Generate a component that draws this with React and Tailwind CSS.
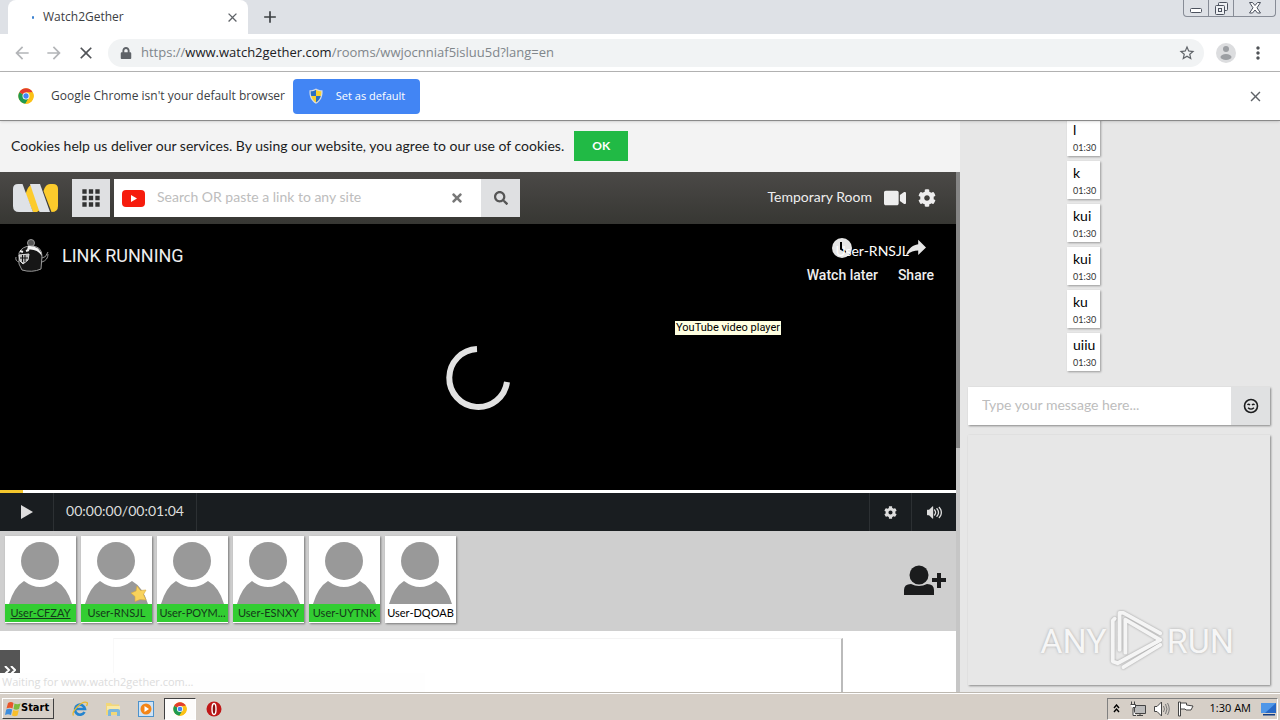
import { useState } from 'react';
import { FaCog, FaLock, FaSearch, FaTimes, FaVideo } from 'react-icons/fa';
import { MdApps, MdArrowBack, MdArrowForward, MdClose, MdAdd, MdStarBorder, MdMoreVert } from 'react-icons/md';
import { ImVolumeHigh } from 'react-icons/im';

const users = [
  { name: 'User-CFZAY', ready: true, me: true },
  { name: 'User-RNSJL', ready: true, host: true },
  { name: 'User-POYM...', ready: true },
  { name: 'User-ESNXY', ready: true },
  { name: 'User-UYTNK', ready: true },
  { name: 'User-DQOAB', ready: false },
];

const messages = ['l', 'k', 'kui', 'kui', 'ku', 'uiiu'];

function ChromeLogo({ className }) {
  return (
    <svg viewBox="0 0 48 48" className={className} aria-hidden="true">
      <circle cx="24" cy="24" r="23" fill="#fbc116" />
      <path d="M24 24 L4.1 12.500 A23 23 0 0 0 22 47 L33.500 29.500 Z" fill="#1e9a50" />
      <path d="M24 24 L4.1 12.500 A23 23 0 0 1 43.900 12.500 L24 13.500 Z" fill="#e33b2e" />
      <path d="M24 13.500 H44.500 A23 23 0 0 1 22 47 L33 29.500 Z" fill="#fbc116" />
      <circle cx="24" cy="24" r="10.500" fill="#fff" />
      <circle cx="24" cy="24" r="8" fill="#4285f4" />
    </svg>
  );
}

function ShieldIcon() {
  return (
    <svg viewBox="0 0 16 16" className="h-4 w-4" aria-hidden="true">
      <path d="M8 0.5 C10 2 12.5 2.3 14.5 2.2 C15 8 13 13 8 15.7 C3 13 1 8 1.5 2.2 C3.5 2.3 6 2 8 0.5Z" fill="#d8dde4" />
      <path d="M8 1.8 C6.5 2.9 4.5 3.3 2.7 3.3 C2.6 5 2.8 6.6 3.2 8 H8Z" fill="#2b6fc4" />
      <path d="M8 1.8 C9.5 2.9 11.5 3.3 13.3 3.3 C13.4 5 13.2 6.6 12.8 8 H8Z" fill="#f8d12f" />
      <path d="M3.2 8 C4 11 5.6 13 8 14.4 V8Z" fill="#f8d12f" />
      <path d="M12.8 8 C12 11 10.4 13 8 14.4 V8Z" fill="#2b6fc4" />
    </svg>
  );
}

function TabStrip() {
  return (
    <div className="flex h-[34px] shrink-0 bg-[#dee1e6] pl-2">
      <div className="flex w-60 items-center rounded-t-lg bg-white pl-6 pr-2">
        <span className="mr-[9px] h-[3px] w-[2px] rounded-full bg-[#3b82d0]" />
        <span className="flex-1 text-[12px] text-[#3c4043]">Watch2Gether</span>
        <button type="button" aria-label="Close tab" className="text-[#5f6368]"><MdClose size={15} /></button>
      </div>
      <button type="button" aria-label="New tab" className="ml-3 text-[#3c4043]"><MdAdd size={20} /></button>
      <div className="ml-auto mr-1 flex h-[17px] w-[93px] divide-x divide-[#878c96] rounded-b border border-t-0 border-[#878c96] text-[#4c525e]">
        <button type="button" aria-label="Minimize" className="flex w-[25px] items-center justify-center">
          <svg viewBox="0 0 12 12" className="h-3 w-3" fill="#fff" stroke="currentColor"><rect x="0.5" y="6.5" width="11" height="4" rx="1" /></svg>
        </button>
        <button type="button" aria-label="Restore" className="flex w-[25px] items-center justify-center">
          <svg viewBox="0 0 13 13" className="h-[13px] w-[13px]" fill="#eef0f3" stroke="currentColor">
            <rect x="3.5" y="0.5" width="9" height="8" rx="1" /><rect x="0.5" y="3.5" width="9" height="9" rx="1" /><rect x="3.5" y="6.5" width="3" height="3" />
          </svg>
        </button>
        <button type="button" aria-label="Close" className="flex flex-1 items-center justify-center">
          <svg viewBox="0 0 12 12" className="h-3 w-3" fill="#fff" stroke="currentColor">
            <path d="M0.5 0.5 H3.5 L6 3.5 L8.5 0.5 H11.5 L8 5.8 L11.5 11 H8.5 L6 8 L3.5 11 H0.5 L4 5.8Z" />
          </svg>
        </button>
      </div>
    </div>
  );
}

function Toolbar() {
  return (
    <div className="flex h-[38px] shrink-0 items-center border-b border-[#b4b4b4] bg-white pl-3 pr-3">
      <button type="button" aria-label="Back" className="mr-3 text-[#b3b5b8]"><MdArrowBack size={20} /></button>
      <button type="button" aria-label="Forward" className="mr-3 text-[#b3b5b8]"><MdArrowForward size={20} /></button>
      <button type="button" aria-label="Stop" className="mr-3 text-[#505357]"><MdClose size={20} /></button>
      <div className="flex h-7 flex-1 items-center rounded-full bg-[#f1f3f4] pl-3 pr-2">
        <FaLock size={12} className="mr-2 text-[#5f6368]" />
        <div role="textbox" aria-label="Address" contentEditable suppressContentEditableWarning
          className="flex-1 pb-[2px] pl-px text-[13px] leading-5 text-[#80868b] outline-none">
          https://<span className="text-[#202124]">www.watch2gether.com</span>/rooms/wwjocnniaf5isluu5d?lang=en
        </div>
        <button type="button" aria-label="Bookmark" className="text-[#5f6368]"><MdStarBorder size={18} /></button>
      </div>
      <button type="button" aria-label="Profile" className="ml-3 mr-3">
        <svg viewBox="0 0 20 20" className="h-5 w-5">
          <circle cx="10" cy="10" r="10" fill="#dcdddf" />
          <circle cx="10" cy="6" r="3" fill="#9c9fa3" />
          <ellipse cx="10" cy="14" rx="5.5" ry="3" fill="#9c9fa3" />
        </svg>
      </button>
      <button type="button" aria-label="Menu" className="text-[#505357]"><MdMoreVert size={20} /></button>
    </div>
  );
}

function InfoBar() {
  return (
    <div className="z-10 flex h-[49px] shrink-0 items-center border-b border-[#8a8a8a] bg-white pl-[18px] pr-4 shadow">
      <ChromeLogo className="h-4 w-4" />
      <span className="ml-[17px] text-[12px] text-[#3c4043]">Google Chrome isn't your default browser</span>
      <button type="button" className="ml-2 flex h-[35px] w-[127px] items-center justify-center gap-3 rounded bg-[#4285f4] text-[11px] text-white">
        <ShieldIcon />
        Set as default
      </button>
      <button type="button" aria-label="Dismiss" className="ml-auto text-[#5f6368]"><MdClose size={17} /></button>
    </div>
  );
}

function RoomHeader() {
  const [query, setQuery] = useState('');

  return (
    <header className="flex h-[52px] shrink-0 items-center bg-linear-to-b from-[#4b4947] to-[#373733] pl-[13px] pr-5 text-[#eee]">
      <svg viewBox="0 0 45 28" className="mr-[14px] h-7 w-[45px]" aria-label="w2g">
        <path d="M12.500 10 Q15 2 18 1 L27 26 L24 28 H20Z" fill="#fccb2c" />
        <path d="M5 0 H9.500 L20 28 H6 Q0 28 0 22 V5 Q0 0 5 0Z" fill="#dfe2e6" />
        <path d="M17 0 H27 L37 28 H26.500Z" fill="#dfe2e6" />
        <path d="M30.500 7 Q32.500 0 37 0 H40 Q45 0 45 5 V22 Q45 28 38.500 28Z" fill="#fccb2c" />
      </svg>
      <button type="button" aria-label="Apps" className="mr-1 flex h-[38px] w-[38px] items-center justify-center bg-[#dfe0e2] text-[#333]">
        <MdApps size={26} />
      </button>
      <div className="flex h-[38px] w-[406px] bg-white">
        <button type="button" aria-label="YouTube" className="px-2">
          <svg viewBox="0 0 23 17" className="h-[17px] w-[23px]"><rect width="23" height="17" rx="4" fill="#f61c0d" /><path d="M9 5 L15 8.5 L9 12Z" fill="#fff" /></svg>
        </button>
        <input type="text" aria-label="Search" placeholder="Search OR paste a link to any site"
          value={query} onChange={e => setQuery(e.target.value)}
          className="min-w-0 flex-1 px-1 pb-1 text-[14px] text-[#333] outline-none placeholder:text-[#bdbdbd]" />
        <button type="button" aria-label="Clear" onClick={() => setQuery('')} className="px-[17px] text-[#777]"><FaTimes size={14} /></button>
        <button type="button" aria-label="Search videos" className="flex w-[39px] items-center justify-center bg-[#dfe0e2] text-[#555]"><FaSearch size={14} /></button>
      </div>
      <span className="ml-auto pb-1 text-[14px]">Temporary Room</span>
      <button type="button" aria-label="Camera" className="ml-3"><FaVideo size={22} /></button>
      <button type="button" aria-label="Room settings" className="ml-3"><FaCog size={18} /></button>
    </header>
  );
}

function Player() {
  return (
    <section className="relative min-h-0 flex-1 bg-black font-[Roboto,sans-serif] text-[#eee]">
      <div className="flex items-start pl-[14px] pr-[22px] pt-[6px]">
        <svg viewBox="0 0 36 36" className="mt-2 h-9 w-9" fill="none" stroke="#999" strokeWidth="1" aria-hidden="true">
          <circle cx="17" cy="5" r="3.500" fill="#555" />
          <path d="M5 15 Q8 8 17 8 Q28 8 28 18 L27 31 Q18 35 8 32 L5 26Z" fill="#161616" />
          <path d="M14 8 Q26 7 28 18 Q22 10 13 12Z" fill="#f2f2f2" stroke="none" />
          <path d="M28 20 Q32 20 34 14 M28 24 Q34 22 34 16 M5 24 Q1 23 2 19" />
          <path d="M6 13 L9 14 M12 13 L15 12" stroke="#eee" strokeWidth="2" />
          <path d="M5 17 L15 16 L14 22 L9 26 L6 23Z" fill="#bbb" stroke="#ddd" />
          <path d="M6 20 H14 M8.500 17 V24 M11 17 V24" stroke="#111" />
        </svg>
        <h1 className="ml-3 mt-[14px] text-[18px] leading-6">LINK RUNNING</h1>
        <div className="ml-auto flex gap-5 text-[14px] font-medium leading-[18px]">
          <button type="button" className="flex flex-col items-center">
            <svg viewBox="0 0 36 36" className="h-9 w-9"><circle cx="18" cy="18" r="10" fill="#e6e6e6" /><path d="M17 12 V19 L22 22" fill="none" stroke="#000" strokeWidth="2" /></svg>
            Watch later
          </button>
          <button type="button" className="flex flex-col items-center">
            <svg viewBox="0 0 36 36" className="h-9 w-9" fill="#e6e6e6">
              <path d="m 20.2,14.2 0,-4.500 7.8,7.8 -7.8,7.6 0,-4.500 C 16.3,20.7 12.1,21.8 9.3,24.8 8.8,25.1 7.6,27.3 8.1,25.6 9.1,21.3 11.8,17.2 16,15.4 c 1.3,-0.6 2.8,-1 4.2,-1.2 z" />
            </svg>
            Share
          </button>
        </div>
      </div>
      <span className="absolute right-[47px] top-[17px] font-[Lato,sans-serif] text-[14px] leading-5 text-white">User-RNSJL</span>
      <svg viewBox="0 0 66 66" className="absolute left-1/2 top-[121px] h-[66px] w-[66px] -translate-x-1/2" fill="none" aria-hidden="true">
        <path d="M32 4 A29 29 0 1 0 62 37" stroke="#e2e2e2" strokeWidth="6" />
      </svg>
      <div role="tooltip" className="absolute right-[175px] top-[97px] bg-[#ffffe1] px-[1px] font-[Roboto,sans-serif] text-[11px] leading-[14px] text-black">
        YouTube video player
      </div>
    </section>
  );
}

function Controls() {
  return (
    <div className="shrink-0">
      <div className="h-[3px] bg-white"><div className="h-full w-[23px] bg-[#f4c62c]" /></div>
      <div className="flex h-[38px] items-stretch bg-[#191d20] text-[#ddd]">
        <button type="button" aria-label="Play" className="flex w-[54px] items-center justify-center border-r border-[#2c3033]">
          <svg viewBox="0 0 12 14" className="h-[14px] w-3"><path d="M0 0 L12 7 L0 14Z" fill="currentColor" /></svg>
        </button>
        <span className="flex w-[143px] items-center justify-center border-r border-[#2c3033] pb-1 text-[14px]">00:00:00/00:01:04</span>
        <button type="button" aria-label="Player settings" className="ml-auto flex w-[42px] items-center justify-center border-l border-[#2c3033]"><FaCog size={13} /></button>
        <button type="button" aria-label="Volume" className="flex w-[45px] items-center justify-center border-l border-[#2c3033]"><ImVolumeHigh size={15} /></button>
      </div>
    </div>
  );
}

function UserCard({ user }) {
  return (
    <li className="relative w-[71px] bg-white pb-[1px] shadow-[1px_1px_2px_#777]">
      <svg viewBox="0 0 71 68" className="h-[68px] w-full" fill="#999" aria-hidden="true">
        <ellipse cx="35" cy="25" rx="19" ry="19" />
        <path d="M4 68 Q9 51 19 45 Q27 51 35 51 Q43 51 51 45 Q62 51 67 68Z" />
      </svg>
      {user.host && (
        <svg viewBox="0 0 16 16" className="absolute right-[5px] top-[50px] h-4 w-4" aria-hidden="true">
          <path d="M6 0 L9.500 4.500 L15 4 L12.500 8.500 L15 14 L9 13.500 L4 15.500 L4 10.500 L0 7 L5 5Z" fill="#f8d25c" stroke="#d9a93c" strokeWidth="0.6" />
        </svg>
      )}
      <div className={`whitespace-nowrap text-center text-[11px] leading-[18px] ${user.ready ? 'bg-[#32cd32] text-[#14381a]' : 'text-black'} ${user.me ? 'underline' : ''}`}>
        {user.name}
      </div>
    </li>
  );
}

function UserBar() {
  return (
    <div className="flex h-[100px] shrink-0 items-start bg-[#cfcfcf] pl-[5px] pr-[10px] pt-[5px]">
      <ul className="flex gap-[5px]">
        {users.map(u => <UserCard key={u.name} user={u} />)}
      </ul>
      <button type="button" aria-label="Invite" className="ml-auto mt-7 text-[#1b1c1d]">
        <svg viewBox="0 0 42 32" className="h-8 w-[42px]" fill="currentColor">
          <circle cx="15" cy="11" r="9.500" />
          <path d="M0 31 V26 Q0 20 7 20 Q15 24 23 20 Q30 20 30 26 V31Z" />
          <path d="M33 9 h4 v5 h5 v4 h-5 v6 h-4 v-6 h-5 v-4 h5Z" />
        </svg>
      </button>
    </div>
  );
}

function Chat() {
  const [text, setText] = useState('');

  return (
    <aside className="flex w-1/4 flex-col bg-[#e7e7e7] pb-[7px] pl-2 pr-[10px]">
      <ul className="flex min-h-0 flex-1 flex-col items-start justify-end gap-[5px] overflow-hidden pb-4 pl-[99px]">
        {messages.map((m, i) => (
          <li key={i} className="w-[33px] shrink-0 bg-white px-[6px] py-[3px] shadow-[1px_1px_2px_#999]">
            <p className="text-[14px] leading-[18px] text-black">{m}</p>
            <time className="block pt-1 text-[9px] leading-[10px] text-[#333]">01:30</time>
          </li>
        ))}
      </ul>
      <div className="flex h-[38px] shrink-0 bg-white shadow-[1px_1px_2px_#888]">
        <input type="text" aria-label="Message" placeholder="Type your message here..."
          value={text} onChange={e => setText(e.target.value)}
          className="min-w-0 flex-1 px-[14px] pb-1 text-[14px] text-[#333] outline-none placeholder:text-[#bdbdbd]" />
        <button type="button" aria-label="Emoji" className="flex w-[39px] items-center justify-center bg-[#e0e1e2] text-[#1b1c1d]">
          <svg viewBox="0 0 16 16" className="h-4 w-4" fill="none" stroke="currentColor" strokeWidth="1.6">
            <circle cx="8" cy="8" r="6.500" />
            <path d="M4.500 7 Q5.500 5.500 7 7 M9 7 Q10.500 5.500 11.500 7 M5 9.800 Q8 12.500 11 9.800" strokeWidth="1.3" />
          </svg>
        </button>
      </div>
      <div className="mt-[10px] flex h-[250px] shrink-0 items-end justify-end pb-3 pr-9 shadow-[1px_1px_2px_#888]">
        <Watermark />
      </div>
    </aside>
  );
}

function Watermark() {
  return (
    <div className="flex items-center gap-[2px] font-[Roboto,sans-serif] text-[34px] leading-[64px] text-[#f6f6f6] [text-shadow:0_0_3px_#aaa]">
      ANY
      <svg viewBox="0 0 56 66" className="h-16 w-14 drop-shadow-[0_0_1px_#999]" fill="none" stroke="#f5f5f5" strokeWidth="4" strokeLinecap="round" strokeLinejoin="round" aria-hidden="true">
        <path d="M5 10 L3 12 V54 L8 56 L52 32 L16 11 V45" />
        <path d="M10 42 V4 L14 4 L52 25 M14 60 L52 37" />
      </svg>
      RUN
    </div>
  );
}

function Taskbar() {
  return (
    <footer className="flex h-7 shrink-0 items-center border-t border-[#bdb8b0] bg-[#d6cfc7] pl-[2px] pr-[2px] text-black shadow-[inset_0_1px_0_#fff]">
      <button type="button" className="mt-1 flex h-[21px] w-[52px] items-center border border-t-white border-l-white border-r-[#404040] border-b-[#404040] pl-[2px] font-['DejaVu_Sans_Condensed','Open_Sans',sans-serif] text-[11px] font-bold">
        <svg viewBox="0 0 16 16" className="h-4 w-4 shrink-0" aria-hidden="true">
          <path d="M3 2 Q6 0 8.500 2 L7.500 7.500 Q5 6 1.500 7.500Z" fill="#e8562a" />
          <path d="M9.500 2.500 Q12 4 15.500 2.500 L14 8 Q11 9.500 8.500 8Z" fill="#7dba3c" />
          <path d="M1.200 8.500 Q4.500 7 7.200 8.500 L6 14 Q3 12.500 0 14Z" fill="#3e8ede" />
          <path d="M8.200 9 Q11 10.500 13.800 9 L12.500 14.500 Q9.500 16 7 14.500Z" fill="#f9bf2c" />
        </svg>
        Start
      </button>
      <nav className="mt-1 ml-[18px] flex items-center">
        <button type="button" aria-label="Internet Explorer" className="mr-[17px]">
          <svg viewBox="0 0 16 16" className="h-4 w-4" fill="none">
            <path d="M12.500 11 A5 5 0 1 1 13 8 H4" stroke="#2484cf" strokeWidth="2.600" />
            <path d="M1.500 14.500 C-1 11 10 -1 15 1.500 C16 2.500 15 4 14.500 5" stroke="#e8b930" strokeWidth="1.300" />
          </svg>
        </button>
        <button type="button" aria-label="Explorer" className="mr-[17px]">
          <svg viewBox="0 0 16 16" className="h-4 w-4">
            <path d="M1 2 H6 L7 3.500 H14 V14 H1Z" fill="#f2d778" /><path d="M2 5 H15 V9 H2Z" fill="#f9e9a8" />
            <path d="M3 15 V10 Q3 8 5 8 H13 Q15 8 15 10 V15 H12 V11 H6 V15Z" fill="#7db8dc" />
          </svg>
        </button>
        <button type="button" aria-label="Media Player" className="mr-[10px]">
          <svg viewBox="0 0 16 16" className="h-4 w-4"><rect x="0.500" y="0.500" width="15" height="15" fill="#cfe3f5" stroke="#4c92cc" /><circle cx="8" cy="8" r="5.500" fill="#f48516" /><path d="M6.500 5 L11 8 L6.500 11Z" fill="#fff" /></svg>
        </button>
        <button type="button" aria-label="Google Chrome" className="flex h-[22px] w-8 items-center justify-center border border-t-[#404040] border-l-[#404040] border-r-white border-b-white bg-[#fdfcfb]">
          <ChromeLogo className="h-[14px] w-[14px]" />
        </button>
        <button type="button" aria-label="Opera" className="ml-[10px]">
          <svg viewBox="0 0 16 16" className="h-4 w-4"><circle cx="8" cy="8" r="7.500" fill="#c01818" /><ellipse cx="8" cy="8" rx="2" ry="5.500" fill="#8a0d0d" stroke="#fff" strokeWidth="1.400" /></svg>
        </button>
      </nav>
      <div className="mt-1 ml-auto flex h-[22px] items-center border border-t-[#808080] border-l-[#808080] border-r-white border-b-white pl-[5px] text-[#444]">
        <button type="button" aria-label="Show hidden icons">
          <svg viewBox="0 0 7 9" className="h-[9px] w-[7px]" fill="none" stroke="#000" strokeWidth="1.400"><path d="M1 4 L3.500 1 L6 4 M1 8 L3.500 5 L6 8" /></svg>
        </button>
        <svg viewBox="0 0 16 16" className="ml-[10px] h-4 w-4" fill="#fff" stroke="currentColor" aria-hidden="true">
          <path d="M4.500 4.500 H15.500 V12.500 H4.500Z" fill="#bbb" /><path d="M7 14.500 H13 M10 12.500 V14.500" /><path d="M0.500 3.500 H5.500 V6.500 H3 V14.500 H6 M1.500 0.500 V3.500 M4.500 0.500 V3.500" />
        </svg>
        <svg viewBox="0 0 16 16" className="ml-2 h-4 w-4" fill="#fff" stroke="currentColor" aria-hidden="true">
          <path d="M0.500 5.500 H3 L7.500 1 V15 L3 10.500 H0.500Z" /><path d="M9.500 5 Q11.500 8 9.500 11 M11.500 3 Q14.500 8 11.500 13 M13.500 2 Q17 8 13.500 14" fill="none" stroke="#777" />
        </svg>
        <svg viewBox="0 0 16 16" className="ml-2 h-4 w-4" fill="#fff" stroke="currentColor" aria-hidden="true">
          <path d="M0.500 1 H2.500 V15 H0.500Z M2.500 2 H8.500 V4 L15 5 L13 9 H8 L7 8 H2.500Z" />
        </svg>
        <time className="ml-4 text-[11px] text-black">1:30 AM</time>
        <button type="button" aria-label="Show desktop" className="ml-[10px]">
          <svg viewBox="0 0 16 14" className="h-[14px] w-4"><rect y="1" width="15" height="10" fill="#2768c6" /><path d="M0 1 H15 L4 11 H0Z" fill="#4f97e8" /><path d="M2 12 H14 V13.500 H2Z" fill="#123d83" /></svg>
        </button>
      </div>
    </footer>
  );
}

export default function App() {
  return (
    <div className="flex h-screen flex-col overflow-hidden bg-white font-['Open_Sans',sans-serif]">
      <TabStrip />
      <Toolbar />
      <InfoBar />
      <main className="flex min-h-0 flex-1 font-[Lato,sans-serif]">
        <div className="flex w-3/4 flex-col">
          <div className="flex h-[51px] shrink-0 items-center bg-[#f3f3f3] px-[11px] pb-[2px] text-[14px] text-[#1b1c1d]">
            <span>Cookies help us deliver our services. By using our website, you agree to our use of cookies.</span>
            <button type="button" className="ml-[10px] h-[30px] w-[54px] bg-[#21ba45] text-[12px] font-bold text-white">OK</button>
          </div>
          <div className="flex min-h-0 flex-1">
            <div className="flex min-w-0 flex-1 flex-col">
              <RoomHeader />
              <Player />
              <Controls />
              <UserBar />
              <div className="relative h-[61px] shrink-0 bg-white pt-[7px] pl-[113px] pr-[113px]">
                <div className="h-full border-t border-l border-r-2 border-t-[#f4f4f4] border-l-[#f9f9f9] border-r-[#bbb]" />
                <button type="button" aria-label="Expand" className="absolute left-0 top-[19px] flex h-6 w-5 items-end justify-center overflow-hidden bg-[#555] text-white">
                  <svg viewBox="0 0 12 8" className="h-2 w-3" fill="none" stroke="currentColor" strokeWidth="2"><path d="M1 0 L5 4 L1 8 M7 0 L11 4 L7 8" /></svg>
                </button>
                <div className="absolute bottom-0 left-0 h-[19px] w-[425px] bg-[#fefefe] pl-[2px] font-['Open_Sans',sans-serif] text-[11px] leading-[18px] text-[#dcdcdc]">
                  Waiting for www.watch2gether.com...
                </div>
              </div>
            </div>
            <div className="w-1 shrink-0 bg-[#c6c6c6]"><div className="h-[53%] bg-[#858585]" /></div>
          </div>
        </div>
        <Chat />
      </main>
      <Taskbar />
    </div>
  );
}
